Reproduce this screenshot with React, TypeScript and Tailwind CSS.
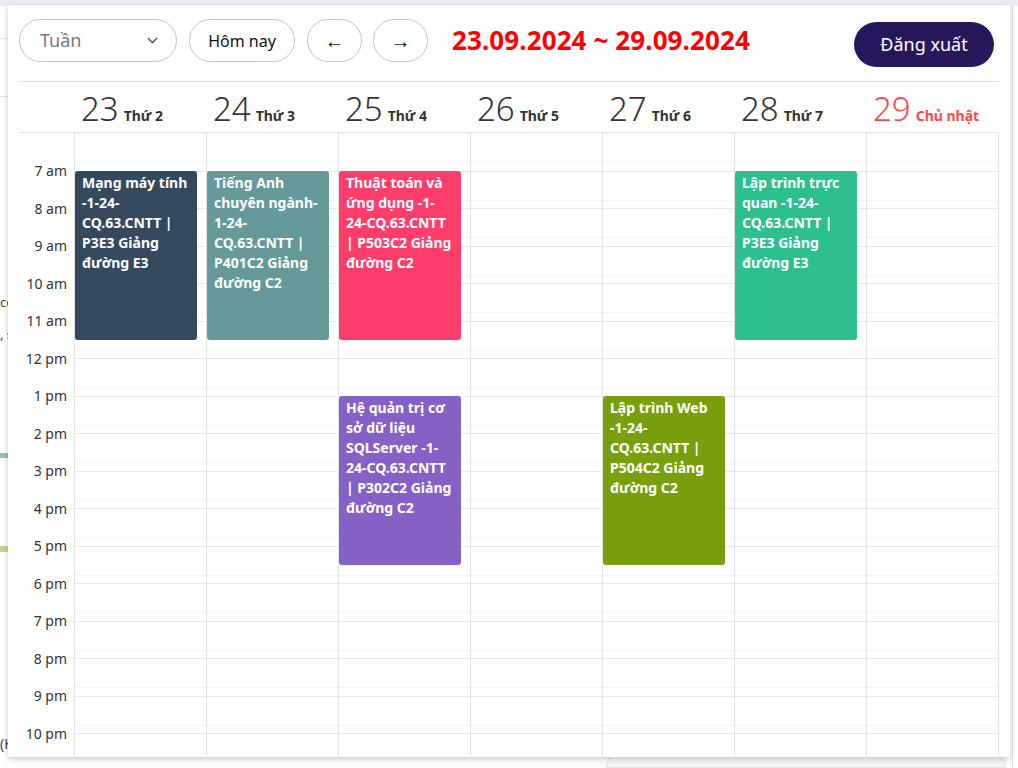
import { ChevronDown } from "lucide-react";

const DAYS = [
  { num: "23", label: "Thứ 2" },
  { num: "24", label: "Thứ 3" },
  { num: "25", label: "Thứ 4" },
  { num: "26", label: "Thứ 5" },
  { num: "27", label: "Thứ 6" },
  { num: "28", label: "Thứ 7" },
  { num: "29", label: "Chủ nhật", sunday: true },
];

const HOURS = [
  "7 am", "8 am", "9 am", "10 am", "11 am", "12 pm", "1 pm", "2 pm",
  "3 pm", "4 pm", "5 pm", "6 pm", "7 pm", "8 pm", "9 pm", "10 pm",
];

interface CalEvent {
  day: number;
  pos: string;
  color: string;
  lines: string[];
}

const EVENTS: CalEvent[] = [
  {
    day: 0,
    pos: "top-[38px]",
    color: "bg-[#34495e]",
    lines: ["Mạng máy tính", "-1-24-", "CQ.63.CNTT |", "P3E3 Giảng", "đường E3"],
  },
  {
    day: 1,
    pos: "top-[38px]",
    color: "bg-[#669999]",
    lines: ["Tiếng Anh", "chuyên ngành-", "1-24-", "CQ.63.CNTT |", "P401C2 Giảng", "đường C2"],
  },
  {
    day: 2,
    pos: "top-[38px]",
    color: "bg-[#ff3d6b]",
    lines: ["Thuật toán và", "ứng dụng -1-", "24-CQ.63.CNTT", "| P503C2 Giảng", "đường C2"],
  },
  {
    day: 5,
    pos: "top-[38px]",
    color: "bg-[#2ebf8e]",
    lines: ["Lập trình trực", "quan -1-24-", "CQ.63.CNTT |", "P3E3 Giảng", "đường E3"],
  },
  {
    day: 2,
    pos: "top-[263px]",
    color: "bg-[#8561c5]",
    lines: ["Hệ quản trị cơ", "sở dữ liệu", "SQLServer -1-", "24-CQ.63.CNTT", "| P302C2 Giảng", "đường C2"],
  },
  {
    day: 4,
    pos: "top-[263px]",
    color: "bg-[#7a9f0e]",
    lines: ["Lập trình Web", "-1-24-", "CQ.63.CNTT |", "P504C2 Giảng", "đường C2"],
  },
];

const ROWS = Array.from({ length: 17 }, (_, i) => i);

const Toolbar = () => (
  <div className="flex items-start justify-between h-[48px]">
    <div className="flex items-center gap-[12px] h-[43px]">
      <div className="flex items-center justify-between w-[158px] h-[43px] rounded-full border border-[#c4c4c4] pl-[20px] pr-[15px]">
        <span className="text-[18px] text-[#7a7a7a]">Tuần</span>
        <ChevronDown size={17} strokeWidth={2} className="text-[#666]" />
      </div>
      <button className="w-[106px] h-[43px] rounded-full border border-[#c4c4c4] text-[16px] text-[#111]">
        Hôm nay
      </button>
      <button className="w-[55px] h-[43px] rounded-full border border-[#c4c4c4] text-[20px] text-[#111]">
        ←
      </button>
      <button className="-ml-[1px] w-[55px] h-[43px] rounded-full border border-[#c4c4c4] text-[20px] text-[#111]">
        →
      </button>
      <div className="ml-[12px] text-[26px] font-bold text-[#ff0000] tracking-[0.1px]">
        23.09.2024 ~ 29.09.2024
      </div>
    </div>
    <button className="mt-[3px] mr-[5px] w-[140px] h-[45px] rounded-full bg-[#27185b] text-white text-[18px]">
      Đăng xuất
    </button>
  </div>
);

const Header = () => (
  <div className="flex h-[52px] border-t border-b border-[#e2e2e2] mt-[14px]">
    <div className="w-[55px] shrink-0" />
    {DAYS.map((d) => (
      <div
        key={d.num}
        className={`w-[132px] shrink-0 flex items-baseline pl-[7px] pt-[7px] ${
          d.sunday ? "text-[#ff4747]" : "text-[#333]"
        }`}
      >
        <span className="text-[33px] font-light leading-[40px]">{d.num}</span>
        <span className="ml-[5px] text-[14px] font-bold">{d.label}</span>
      </div>
    ))}
  </div>
);

const DayColumn = ({ index }: { index: number }) => (
  <div className="relative w-[132px] shrink-0 border-l border-[#e3e3e3]">
    {ROWS.map((r) => (
      <div
        key={r}
        className={`h-[37.5px] ${r === 0 ? "" : "border-t border-[#e8e8e8]"}`}
      >
        <div className="h-[29px] border-b border-dotted border-[#ececec]" />
      </div>
    ))}
    {EVENTS.filter((e) => e.day === index).map((e) => (
      <div
        key={e.lines[0]}
        className={`absolute left-0 w-[122px] h-[169px] rounded-[3px] pl-[7px] pt-[2px] ${e.pos} ${e.color}`}
      >
        {e.lines.map((l) => (
          <div key={l} className="text-white text-[14px] font-bold leading-[20px] whitespace-nowrap">
            {l}
          </div>
        ))}
      </div>
    ))}
  </div>
);

const Body = () => (
  <div className="flex flex-1 overflow-hidden">
    <div className="w-[55px] shrink-0 flex flex-col">
      <div className="h-[18.75px] shrink-0" />
      {HOURS.map((h) => (
        <div
          key={h}
          className="h-[37.5px] shrink-0 flex items-center justify-end pr-[7px] text-[14px] text-[#333]"
        >
          {h}
        </div>
      ))}
    </div>
    {DAYS.map((_, i) => (
      <DayColumn key={i} index={i} />
    ))}
    <div className="w-px shrink-0 bg-[#e3e3e3]" />
  </div>
);

// page behind the modal, only its edges show
const Backdrop = () => (
  <div className="flex flex-col h-full">
    <div className="h-[6px] bg-[#e9edf5]" />
    <div className="flex flex-1">
      <div className="w-[60px] flex flex-col text-[13px] text-[#444]">
        <div className="h-[33px] border-b border-[#e6e6e6]" />
        <div className="h-[58px] border-b border-[#e6e6e6]" />
        <div className="mt-[196px] leading-[18px]">co</div>
        <div className="mt-[14px] leading-[18px]">, s</div>
        <div className="mt-[110px] h-[5px] bg-[#9cc0b0]" />
        <div className="mt-[88px] h-[6px] bg-[#c5d88a]" />
        <div className="mt-[184px] leading-[16px] text-[14px] whitespace-nowrap">(H</div>
      </div>
      <div className="flex-1" />
      <div className="w-[6px] border-l border-[#e0e0e0]" />
    </div>
    <div className="flex justify-end pr-[12px]">
      <div className="w-[400px] h-[14px] -mt-[14px] rounded-t-[12px] bg-[#f6f6f6] border border-[#e4e4e4]" />
    </div>
  </div>
);

export default function App() {
  return (
    <div
      className="relative w-[1018px] h-[768px] overflow-hidden bg-white"
      style={{ fontFamily: '"Noto Sans", "Open Sans", sans-serif' }}
    >
      <Backdrop />
      <div className="absolute left-[8px] top-[5px] w-[1002px] h-[752px] bg-white shadow-[0_2px_6px_rgba(0,0,0,0.22)] flex flex-col px-[11px] pt-[14px]">
        <Toolbar />
        <Header />
        <Body />
      </div>
    </div>
  );
}
